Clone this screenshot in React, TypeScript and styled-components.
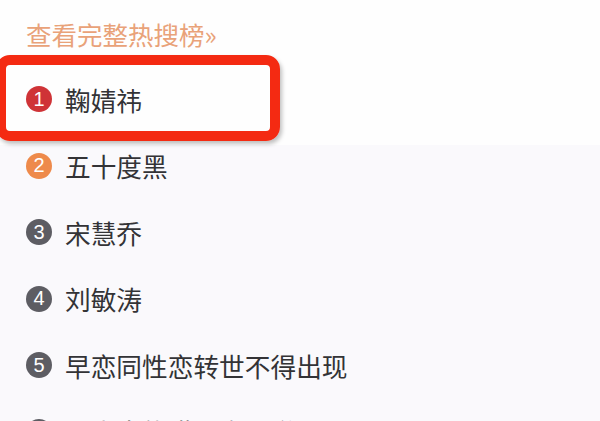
import { createGlobalStyle, styled } from 'styled-components';

const GlobalStyle = createGlobalStyle`
  html, body {
    margin: 0;
    padding: 0;
    background: #fcfbfd;
    overflow: hidden;
  }
  body {
    font-family: "Noto Sans CJK SC", "Noto Sans", sans-serif;
  }
`;

const Page = styled.div`
  width: 600px;
  height: 421px;
  overflow: hidden;
  background: linear-gradient(#fefefe 0, #fefefe 145px, #faf9fc 145px);
`;

const MoreLink = styled.a`
  display: flex;
  align-items: center;
  height: 66px;
  padding-left: 26px;
  color: #e9a279;
  font-size: 25.5px;
  text-decoration: none;
`;

const List = styled.ul`
  list-style: none;
  margin: 0;
  padding: 0;
`;

const Row = styled.li<{ $marked?: boolean }>`
  position: relative;
  display: flex;
  align-items: center;
  gap: 13px;
  height: 66.5px;
  padding-left: 26px;
  color: #333336;
  font-size: 25.7px;

  ${p => p.$marked && `
    &::before {
      content: "";
      position: absolute;
      left: -4px;
      top: -11px;
      width: 264px;
      height: 66px;
      border: 10px solid #f42a12;
      border-radius: 14px;
      box-shadow: 2px 3px 4px rgba(0, 0, 0, 0.25);
    }
  `}
`;

const Badge = styled.span<{ $tone: string }>`
  display: flex;
  align-items: center;
  justify-content: center;
  width: 26px;
  height: 26px;
  border-radius: 50%;
  background: ${p => p.$tone};
  color: #fff;
  font-family: "Liberation Sans", Arial, sans-serif;
  font-size: 20px;
  flex-shrink: 0;
`;

const items = [
  { name: '鞠婧祎', tone: '#cf3337' },
  { name: '五十度黑', tone: '#ee8a4b' },
  { name: '宋慧乔', tone: '#5d5d63' },
  { name: '刘敏涛', tone: '#5d5d63' },
  { name: '早恋同性恋转世不得出现', tone: '#5d5d63' },
  { name: '野生大熊猫现身国道', tone: '#5d5d63' },
];

export default function App() {
  return (
    <Page>
      <GlobalStyle />
      <MoreLink href="#">查看完整热搜榜»</MoreLink>
      <List>
        {items.map((item, i) => (
          <Row key={item.name} $marked={i === 0}>
            <Badge $tone={item.tone}>{i + 1}</Badge>
            {item.name}
          </Row>
        ))}
      </List>
    </Page>
  );
}
